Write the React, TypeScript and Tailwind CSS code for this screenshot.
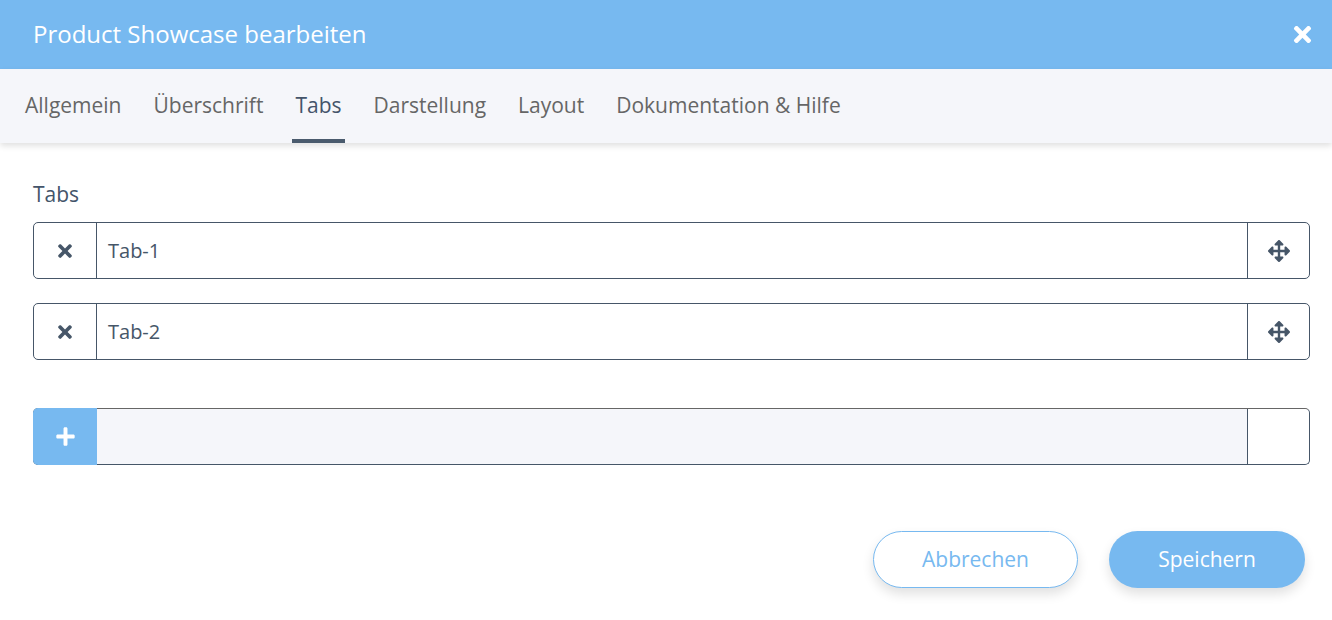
import React from "react";
import { FaTimes, FaArrowsAlt, FaPlus } from "react-icons/fa";

const tabs = ["Allgemein", "Überschrift", "Tabs", "Darstellung", "Layout", "Dokumentation & Hilfe"];

function Row({ label }: { label: string }) {
  return (
    <div className="flex h-[57px] rounded-[5px] border border-[#465668] bg-white">
      <div className="flex w-[63px] items-center justify-center border-r border-[#465668] text-[#465668]">
        <FaTimes className="h-[20px] w-[20px]" />
      </div>
      <div className="flex flex-1 items-center pl-[11px] text-[20px] text-[#465668]">{label}</div>
      <div className="flex w-[62px] items-center justify-center border-l border-[#465668] text-[#465668]">
        <FaArrowsAlt className="h-[22px] w-[22px]" />
      </div>
    </div>
  );
}

export default function App() {
  return (
    <div className="h-[620px] w-[1332px] bg-white" style={{ fontFamily: '"Open Sans", sans-serif' }}>
      <div className="flex h-[69px] items-center justify-between bg-[#77b9f0] pl-[33px] pr-[17px]">
        <div className="pb-[2px] text-[24px] text-white">Product Showcase bearbeiten</div>
        <FaTimes className="h-[25px] w-[25px] text-white" />
      </div>
      <div className="relative z-10 flex h-[74px] items-stretch gap-[26px] bg-[#f5f6fa] pl-[22px] shadow-[0_3px_6px_rgba(0,0,0,0.12)]">
        {tabs.map((t) => (
          <div
            key={t}
            className={
              t === "Tabs"
                ? "flex items-center border-b-[4px] border-[#4a5b6d] px-[3px] pt-[4px] text-[21px] text-[#44546a]"
                : "flex items-center border-b-[4px] border-transparent px-[3px] pt-[4px] text-[21px] text-[#666666]"
            }
          >
            {t}
          </div>
        ))}
      </div>
      <div className="pl-[33px] pr-[22px] pt-[37px]">
        <div className="text-[21px] leading-[28px] text-[#44546a]">Tabs</div>
        <div className="mt-[14px] flex flex-col gap-[24px]">
          <Row label="Tab-1" />
          <Row label="Tab-2" />
        </div>
        <div className="mt-[48px] flex h-[57px] rounded-[5px] border border-[#465668] border-t-[#666666] bg-[#f5f6fa]">
          <div className="-my-px -ml-px flex w-[64px] items-center justify-center rounded-l-[5px] bg-[#77b9f0] text-white">
            <FaPlus className="h-[21px] w-[21px]" />
          </div>
          <div className="flex-1" />
          <div className="w-[62px] rounded-r-[5px] border-l border-[#465668] bg-white" />
        </div>
        <div className="mt-[66px] flex justify-end gap-[31px] pr-[5px]">
          <button className="flex h-[57px] w-[205px] items-center justify-center rounded-full border border-[#77b9f0] bg-white text-[21px] text-[#77b9f0] shadow-[0_6px_12px_rgba(0,0,0,0.12)]">
            Abbrechen
          </button>
          <button className="flex h-[57px] w-[196px] items-center justify-center rounded-full bg-[#77b9f0] text-[21px] text-white shadow-[0_6px_12px_rgba(0,0,0,0.12)]">
            Speichern
          </button>
        </div>
      </div>
    </div>
  );
}
